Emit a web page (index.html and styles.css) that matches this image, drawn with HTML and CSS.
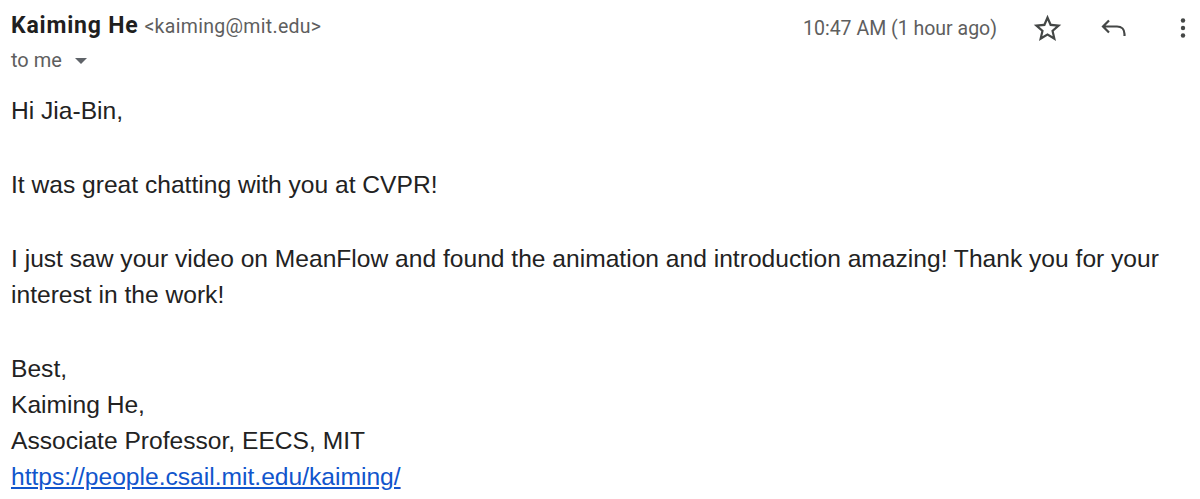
FILE: index.html
```html
<!DOCTYPE html>
<html>
<head>
<meta charset="utf-8">
<link rel="stylesheet" href="styles.css">
</head>
<body>
<div class="mail">
  <div class="head">
    <div class="from">
      <div class="sender"><span class="name">Kaiming He</span> <span class="addr">&lt;kaiming@mit.edu&gt;</span></div>
      <div class="to">to me <svg class="caret" viewBox="0 0 10 5" width="12" height="6"><path d="M0 0h10L5 5z" fill="#5f6368"/></svg></div>
    </div>
    <div class="meta">
      <span class="time">10:47 AM (1 hour ago)</span>
      <span class="icon star"><svg viewBox="0 0 24 24" width="33" height="33"><path d="M12 15.4l-3.76 2.27 1-4.28-3.32-2.88 4.38-.38L12 6.1l1.71 4.04 4.38.38-3.32 2.88 1 4.28L12 15.4zM22 9.24l-7.19-.62L12 2 9.19 8.63 2 9.24l5.46 4.73L5.82 21 12 17.27 18.18 21l-1.63-7.03L22 9.24z" fill="#444746"/></svg></span>
      <span class="icon reply"><svg viewBox="0 0 26 18" width="26" height="18"><path d="M8 1.5L2 7.5l6 6M2.5 7.5h13.5c4.5 0 7.5 3 7.5 7.5v2" fill="none" stroke="#444746" stroke-width="2.2" stroke-linejoin="miter"/></svg></span>
      <span class="icon more"><svg viewBox="0 0 6 20" width="6" height="20"><circle cx="3" cy="2.5" r="2.2" fill="#444746"/><circle cx="3" cy="10" r="2.2" fill="#444746"/><circle cx="3" cy="17.5" r="2.2" fill="#444746"/></svg></span>
    </div>
  </div>
  <div class="body">
    <div class="line">Hi Jia-Bin,</div>
    <div class="gap"></div>
    <div class="line">It was great chatting with you at CVPR!</div>
    <div class="gap"></div>
    <div class="line">I just saw your video on MeanFlow and found the animation and introduction amazing! Thank you for your interest in the work!</div>
    <div class="gap"></div>
    <div class="line">Best,</div>
    <div class="line">Kaiming He,</div>
    <div class="line">Associate Professor, EECS, MIT</div>
    <div class="line"><a href="#" class="link">https://people.csail.mit.edu/kaiming/</a></div>
  </div>
</div>
</body>
</html>
```

FILE: styles.css
```css
html, body {
  margin: 0;
  padding: 0;
  background: #ffffff;
}
.mail {
  padding: 8px 10px 0 11px;
}
.head {
  display: flex;
  justify-content: space-between;
  align-items: flex-start;
}
.from {
  font-family: Roboto, "Liberation Sans", sans-serif;
}
.sender {
  line-height: 36px;
  white-space: nowrap;
}
.name {
  font-weight: 700;
  font-size: 23px;
  letter-spacing: 0.8px;
  color: #1f1f1f;
  margin-right: 2px;
}
.addr {
  font-size: 19.5px;
  letter-spacing: 0.3px;
  color: #5e5e5e;
}
.to {
  font-size: 20px;
  color: #5e5e5e;
  line-height: 28px;
  display: flex;
  align-items: center;
  gap: 13px;
}
.caret {
  display: block;
  margin-top: 2px;
}
.meta {
  display: flex;
  align-items: center;
  height: 40px;
  font-family: Roboto, "Liberation Sans", sans-serif;
}
.time {
  font-size: 19.5px;
  color: #5e5e5e;
  margin-right: 34px;
}
.icon {
  display: flex;
  align-items: center;
  justify-content: center;
}
.star { margin-right: 37px; }
.reply { margin-right: 53px; }
.more { margin-right: 4px; }
.body {
  margin-top: 19px;
  font-family: "Liberation Sans", Arial, sans-serif;
  font-size: 24.6px;
  color: #222222;
  line-height: 36px;
  padding-right: 20px;
}
.gap {
  height: 38px;
}
.link {
  color: #1155cc;
  text-decoration: underline;
}
```
